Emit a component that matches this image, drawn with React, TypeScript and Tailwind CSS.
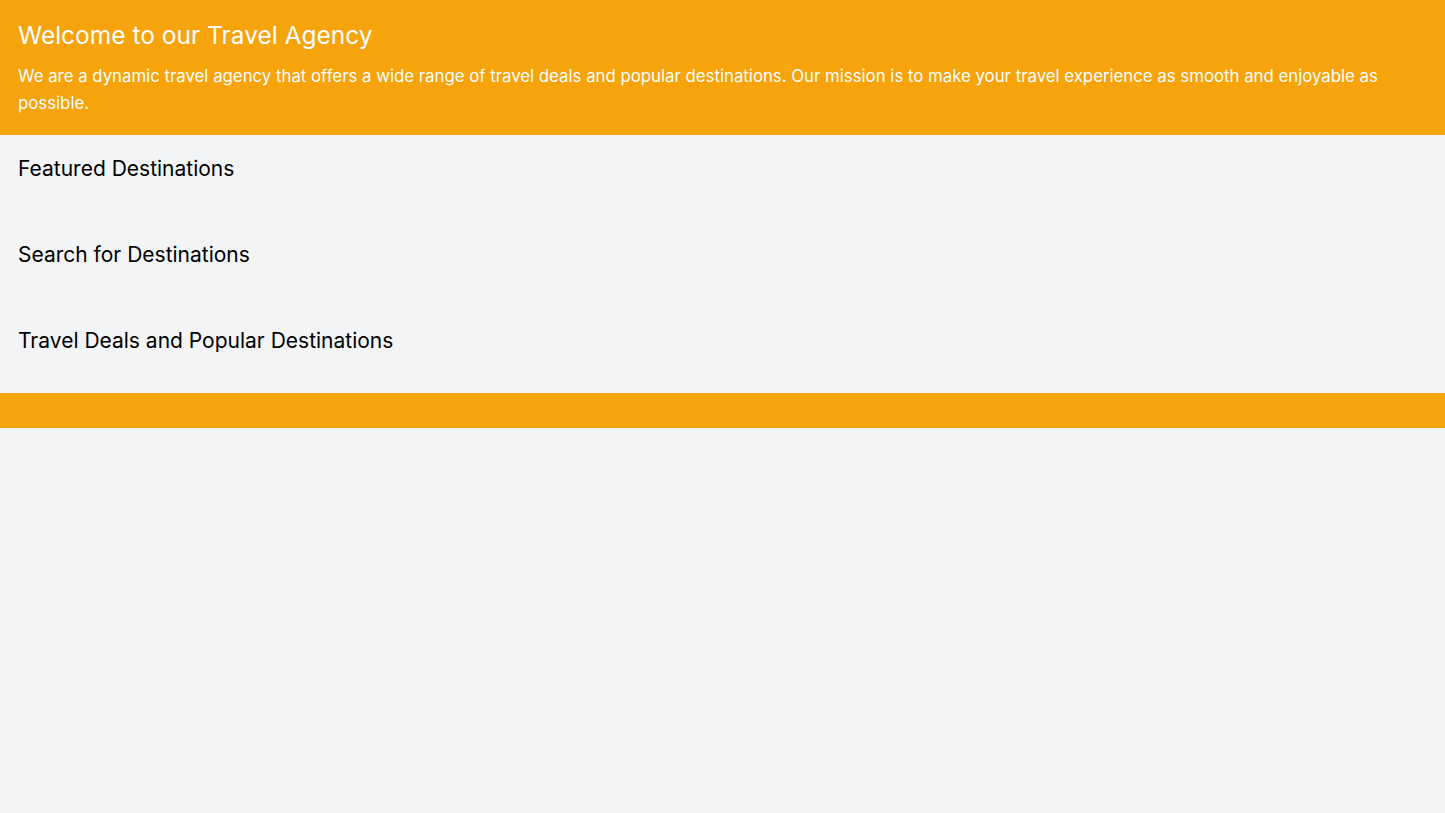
export default function App() {
  return (
    <div className="min-h-screen bg-[#f3f4f6] font-['Inter',sans-serif]">
      <header className="bg-[#f7a30c] px-[18px] pt-[17px] pb-[18px] text-white">
        <h1 className="text-[24.5px] leading-[36px]">Welcome to our Travel Agency</h1>
        <p className="mt-[10px] text-[16.8px] leading-[27px]">
          We are a dynamic travel agency that offers a wide range of travel deals and popular destinations. Our mission is to make your travel experience as smooth and enjoyable as possible.
        </p>
      </header>
      <main className="flex flex-col gap-[58px] px-[18px] pt-[20px] pb-[38px]">
        <section>
          <h2 className="text-[21px] leading-[28px] text-black">Featured Destinations</h2>
        </section>
        <section>
          <h2 className="text-[21px] leading-[28px] text-black">Search for Destinations</h2>
        </section>
        <section>
          <h2 className="text-[21px] leading-[28px] text-black">Travel Deals and Popular Destinations</h2>
        </section>
      </main>
      <footer className="h-[35px] bg-[#f7a30c]"></footer>
    </div>
  );
}
